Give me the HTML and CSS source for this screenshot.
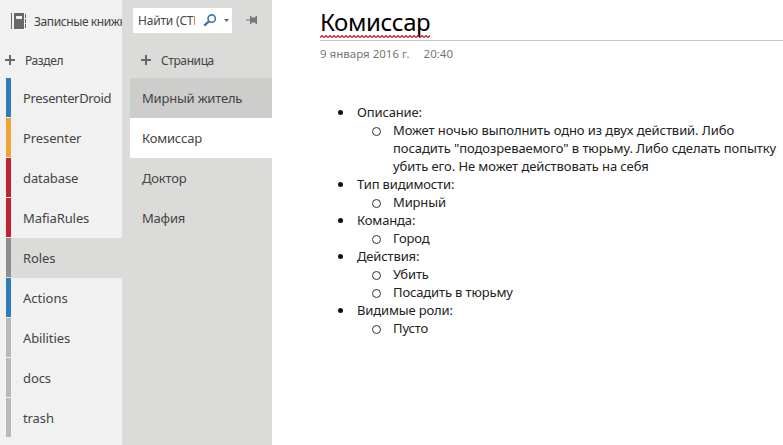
FILE: index.html
```html
<!DOCTYPE html>
<html lang="ru">
<head>
<meta charset="utf-8">
<title>Комиссар</title>
<link rel="stylesheet" href="styles.css">
</head>
<body>
<div class="app">
  <nav class="sections">
    <div class="notebooks">
      <svg class="book" width="16" height="17" viewBox="0 0 16 17"><path fill="#686868" d="M0 0h1v16H0zM3 0h10v16H3zM14 1h1v4h-1zM14 6h1v4h-1zM14 11h1v4h-1z"/><path fill="#f1f1f1" d="M5 3h6v3H5z"/></svg>
      <span>Записные книжки</span>
    </div>
    <div class="add add-section"><svg width="10" height="10" viewBox="0 0 10 10"><path d="M4 0h2v4h4v2H6v4H4V6H0V4h4z" fill="#686868"/></svg><span>Раздел</span></div>
    <ul class="tabs">
      <li class="blue"><span class="name-long">PresenterDroid</span></li>
      <li class="orange">Presenter</li>
      <li class="red">database</li>
      <li class="red">MafiaRules</li>
      <li class="gray selected">Roles</li>
      <li class="blue">Actions</li>
      <li class="light">Abilities</li>
      <li class="light">docs</li>
      <li class="light">trash</li>
    </ul>
  </nav>
  <aside class="pages">
    <div class="tools">
      <div class="search">
        <span class="query">Найти (CTRL+E)</span>
        <svg width="14" height="13" viewBox="0 0 14 13" fill="none" stroke="#3f73ad"><circle cx="8.7" cy="4.6" r="3.7" stroke-width="1.6"/><path d="M6 7.3 1.2 11.7" stroke-width="2.3"/></svg>
        <svg class="caret" width="5" height="3" viewBox="0 0 5 3"><path d="M0 0h5L2.5 3z" fill="#666"/></svg>
      </div>
      <svg class="pin" width="12" height="8" viewBox="0 0 12 8"><path fill="#777" d="M0 3.4h4V0h1.4v1.5H9.5V0H11v8H9.500V6.500H5.400V8H4V4.600H0z"/></svg>
    </div>
    <div class="add add-page"><svg width="10" height="10" viewBox="0 0 10 10"><path d="M4 0h2v4h4v2H6v4H4V6H0V4h4z" fill="#686868"/></svg><span>Страница</span></div>
    <ul class="page-list">
      <li class="hover">Мирный житель</li>
      <li class="current">Комиссар</li>
      <li>Доктор</li>
      <li>Мафия</li>
    </ul>
  </aside>
  <main class="note">
    <header>
      <h1>Комиссар</h1>
      <svg class="squiggle" width="110" height="3" viewBox="0 0 110 3"><defs><pattern id="wave" width="4" height="3" patternUnits="userSpaceOnUse"><path d="M-1 1.500 0 2.500 2 .5 4 2.500 5 1.500" fill="none" stroke="#c00d18" stroke-width="1.1"/></pattern></defs><path d="M0 0h110v3H0z" fill="url(#wave)"/></svg>
    </header>
    <div class="date"><span>9 января 2016 г.</span><span>20:40</span></div>
    <ul class="outline">
      <li>Описание:
        <ul><li class="para">Может ночью выполнить одно из двух действий. Либо<br>посадить "подозреваемого" в тюрьму. Либо сделать попытку<br>убить его. Не может действовать на себя</li></ul>
      </li>
      <li>Тип видимости:<ul><li>Мирный</li></ul></li>
      <li>Команда:<ul><li>Город</li></ul></li>
      <li>Действия:<ul><li>Убить</li><li>Посадить в тюрьму</li></ul></li>
      <li>Видимые роли:<ul><li>Пусто</li></ul></li>
    </ul>
  </main>
</div>
</body>
</html>
```
FILE: styles.css
```css
* { box-sizing: border-box; }
body { margin: 0; background: #fff; font-family: "Noto Sans", sans-serif; overflow: hidden; }
ul { list-style: none; margin: 0; padding: 0; }
svg { display: block; flex: none; }
.app { display: flex; width: 783px; height: 445px; }
.sections { width: 122px; background: #f1f1f1; color: #444; overflow: hidden; flex: none; }
.notebooks { display: flex; align-items: center; height: 42px; padding-left: 11px; font-size: 12px; letter-spacing: -.4px; white-space: nowrap; }
.notebooks span { margin-left: 7px; }
.add { display: flex; align-items: center; height: 36px; font-size: 12px; letter-spacing: -.4px; }
.add-section { padding-left: 5px; }
.add-section span { margin-left: 10px; }
.tabs li { height: 40px; margin-left: 6px; padding-left: 17px; font-size: 13px; line-height: 40px; background: linear-gradient(var(--tab), var(--tab)) 0 0 / 5px 39px no-repeat; }
.blue { --tab: #2e7cb8; }
.orange { --tab: #efa536; }
.red { --tab: #c1222d; }
.gray { --tab: #8d8d8d; }
.light { --tab: #b9b9b9; }
.tabs li.selected { background-color: #dbdbda; }
.name-long { letter-spacing: -.35px; }
.tabs li:not(.blue) { letter-spacing: -.1px; }
.pages { width: 150px; background: #dbdbda; color: #444; flex: none; padding-left: 8px; }
.tools { display: flex; height: 42px; padding: 8px 0 0 3px; }
.search { display: flex; align-items: center; width: 99px; height: 25px; background: #fff; padding-left: 5px; font-size: 12px; }
.query { width: 57px; overflow: hidden; white-space: nowrap; margin-right: 8px; letter-spacing: -.2px; }
.caret { margin-left: 7px; }
.pin { margin: 8px 0 0 14px; }
.add-page { padding-left: 11px; }
.add-page span { margin-left: 10px; }
.page-list li { height: 40px; line-height: 40px; padding-left: 12px; font-size: 13px; letter-spacing: -.2px; }
.hover { background: #cdcdcc; }
.current { background: #fff; }
.note { flex: 1; padding-left: 320px; margin-left: -272px; color: #222; }
.note header { height: 41px; border-bottom: 1px solid #c6c6c6; }
h1 { margin: 0; height: 35px; line-height: 43px; font-size: 24px; font-weight: 400; color: #000; letter-spacing: -.4px; }
.squiggle { position: relative; }
.date { display: flex; gap: 14px; margin-top: 4px; height: 18px; line-height: 18px; font-size: 11.5px; color: #767676; }
.outline { margin: 40px 0 0 17px; font-size: 13px; line-height: 18px; letter-spacing: -.14px; white-space: nowrap; }
.para { letter-spacing: -.08px; }
.outline > li { padding-left: 20px; position: relative; }
.outline > li::before { content: ""; position: absolute; left: 1px; top: 7px; width: 5px; height: 5px; border-radius: 50%; background: #111; }
.outline ul li { padding-left: 36px; position: relative; }
.outline ul li::before { content: ""; position: absolute; left: 15px; top: 6px; width: 7px; height: 7px; border-radius: 50%; border: 1px solid #333; }
```
